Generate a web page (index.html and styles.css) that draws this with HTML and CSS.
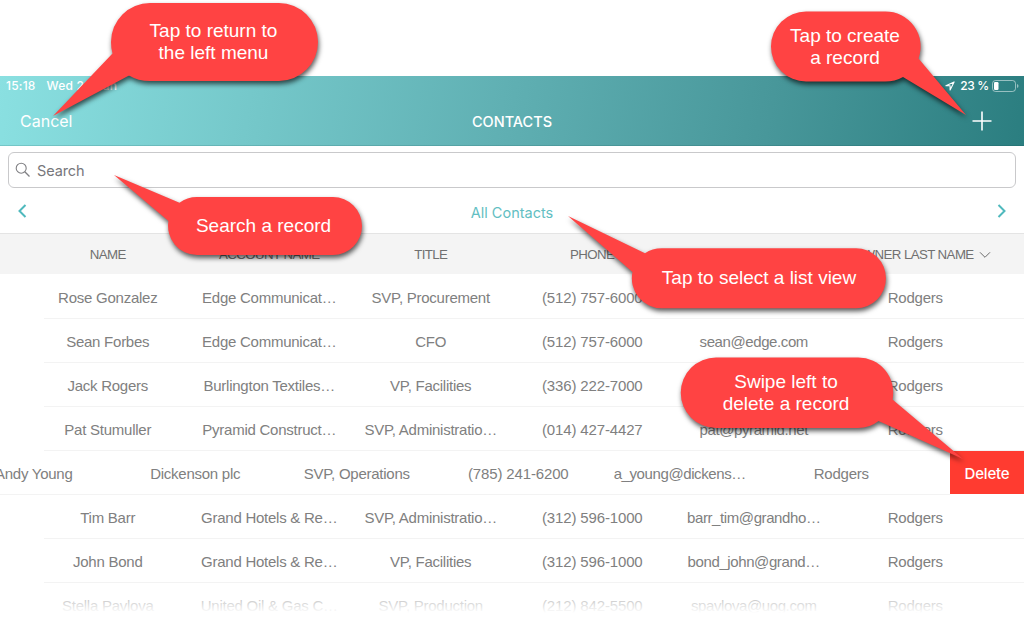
FILE: index.html
```html
<!DOCTYPE html>
<html lang="en">
<head>
<meta charset="utf-8">
<title>Contacts</title>
<link rel="stylesheet" href="styles.css">
</head>
<body>
<div class="page">
  <header class="topbar">
    <div class="status">
      <div class="status-left"><span>15:18</span><span>Wed 26 Jun</span></div>
      <div class="status-right">
        <svg class="wifi" width="13" height="10" viewBox="0 0 13 10"><path d="M1 4a8 8 0 0 1 11 0M3 6.300a5 5 0 0 1 7 0M6.500 9v-1" fill="none" stroke="#fff" stroke-width="1.400"/></svg>
        <svg class="arrow" width="10" height="10" viewBox="0 0 10 10"><path d="M9.100 .9L.9 4.700h4.200v4.300z" fill="none" stroke="#fff" stroke-width="1.100" stroke-linejoin="round"/></svg>
        <span class="percent">23 %</span>
        <svg class="battery" width="27" height="12" viewBox="0 0 27 12"><rect x=".5" y=".5" width="23" height="11" rx="3" fill="none" stroke="#fff" stroke-opacity=".5"/><rect x="2" y="2" width="4.500" height="8" rx="1.200" fill="#fff"/><path d="M25 4v4q1.500-.6 1.500-2t-1.500-2z" fill="#fff" fill-opacity=".5"/></svg>
      </div>
    </div>
    <div class="nav">
      <span class="cancel">Cancel</span>
      <span class="title">CONTACTS</span>
      <svg class="plus" width="20" height="20" viewBox="0 0 20 20"><path d="M10 .5v19M.5 10h19" stroke="#fff" stroke-width="1.600"/></svg>
    </div>
  </header>

  <div class="search">
    <svg width="16" height="16" viewBox="0 0 16 16"><circle cx="6.200" cy="6.200" r="5" fill="none" stroke="#808084" stroke-width="1.100"/><path d="M9.800 9.800L14.500 14.500" stroke="#808084" stroke-width="1.300"/></svg>
    <span>Search</span>
  </div>

  <div class="switcher">
    <svg width="9" height="14" viewBox="0 0 9 14"><path d="M7.500 1L1.500 7l6 6" fill="none" stroke="#4fb9bd" stroke-width="2"/></svg>
    <span>All Contacts</span>
    <svg width="9" height="14" viewBox="0 0 9 14"><path d="M1.500 1L7.500 7l-6 6" fill="none" stroke="#4fb9bd" stroke-width="2"/></svg>
  </div>

  <div class="columns head">
    <span>NAME</span><span>ACCOUNT NAME</span><span>TITLE</span><span>PHONE</span><span></span>
    <span class="sorted">OWNER LAST NAME<svg width="12" height="8" viewBox="0 0 12 8"><path d="M1 1.300l5 5 5-5" fill="none" stroke="#6c6c6c"/></svg></span>
  </div>

  <main class="list">
    <div class="columns row"><span>Rose Gonzalez</span><span>Edge Communicat…</span><span>SVP, Procurement</span><span class="phone">(512) 757-6000</span><span></span><span>Rodgers</span></div>
    <div class="columns row"><span>Sean Forbes</span><span>Edge Communicat…</span><span>CFO</span><span class="phone">(512) 757-6000</span><span class="mail">sean@edge.com</span><span>Rodgers</span></div>
    <div class="columns row"><span>Jack Rogers</span><span>Burlington Textiles…</span><span>VP, Facilities</span><span class="phone">(336) 222-7000</span><span></span><span>Rodgers</span></div>
    <div class="columns row"><span>Pat Stumuller</span><span>Pyramid Construct…</span><span>SVP, Administratio…</span><span class="phone">(014) 427-4427</span><span class="mail">pat@pyramid.net</span><span>Rodgers</span></div>
    <div class="swiped">
      <div class="columns row"><span>Andy Young</span><span>Dickenson plc</span><span>SVP, Operations</span><span class="phone">(785) 241-6200</span><span class="mail">a_young@dickens…</span><span>Rodgers</span></div>
      <div class="delete">Delete</div>
    </div>
    <div class="columns row"><span>Tim Barr</span><span>Grand Hotels &amp; Re…</span><span>SVP, Administratio…</span><span class="phone">(312) 596-1000</span><span class="mail">barr_tim@grandho…</span><span>Rodgers</span></div>
    <div class="columns row"><span>John Bond</span><span>Grand Hotels &amp; Re…</span><span>VP, Facilities</span><span class="phone">(312) 596-1000</span><span class="mail">bond_john@grand…</span><span>Rodgers</span></div>
    <div class="columns row"><span>Stella Pavlova</span><span>United Oil &amp; Gas C…</span><span>SVP, Production</span><span class="phone">(212) 842-5500</span><span class="mail">spavlova@uog.com</span><span>Rodgers</span></div>
  </main>
  <div class="fade"></div>

  <svg class="tails" width="1024" height="620" viewBox="0 0 1024 620">
    <g fill="#ff4343">
      <path class="bubble" d="M150 3H279A39 39 0 0 1 279 81H150Q138 81 129 75.500L53 116L112.500 53.500Q111 48 111 42A39 39 0 0 1 150 3Z"/>
      <path class="bubble" d="M806 11.500H885A35 35 0 0 1 918.500 58.500L966 115L903 77Q895 81.500 885 81.500H806A35 35 0 0 1 806 11.500Z"/>
      <path class="bubble" d="M197 197H333A29 29 0 0 1 333 255H197A29 29 0 0 1 168.500 221L114 175L179.500 202.700Q187 197 197 197Z"/>
      <path class="bubble" d="M662 248.300H856A30 30 0 0 1 856 308.300H662A30 30 0 0 1 632.500 272L568 216L645 253.200Q652 248.300 662 248.300Z"/>
      <path class="bubble" d="M716 357.500H858A35 35 0 0 1 892.500 399.500L963 459L878.500 421Q870 428 858 428H716A35 35 0 0 1 716 357.500Z"/>
    </g>
  </svg>
  <div class="note note-menu">Tap to return to<br>the left menu</div>
  <div class="note note-create">Tap to create<br>a record</div>
  <div class="note note-search">Search a record</div>
  <div class="note note-view">Tap to select a list view</div>
  <div class="note note-delete">Swipe left to<br>delete a record</div>
</div>
</body>
</html>
```
FILE: styles.css
```css
* { box-sizing: border-box; }
body { margin: 0; background: #fff; }
.page {
  position: relative;
  width: 1024px;
  height: 620px;
  padding-top: 76px;
  overflow: hidden;
  font-family: Inter, sans-serif;
}
.topbar {
  height: 70px;
  background: linear-gradient(99deg, #8ae0e1 0%, #5fafb2 50%, #48979a 75%, #2b7e80 100%);
  border-bottom: 1px solid rgba(0, 60, 60, .15);
  color: #fff;
}
.status {
  display: flex;
  justify-content: space-between;
  height: 20px;
  padding: 0 5px 0 6px;
  font-size: 12px;
  font-weight: 500;
  line-height: 20px;
}
.status-left { display: flex; gap: 11px; letter-spacing: .2px; }
.status-right { display: flex; align-items: center; }
.arrow { margin: 0 5px 0 5px; }
.battery { margin-left: 3px; }
.percent { letter-spacing: -.3px; }
.nav {
  display: grid;
  grid-template-columns: 1fr auto 1fr;
  align-items: center;
  height: 50px;
  padding: 0 32px 0 20px;
}
.cancel { font-size: 16px; font-weight: 400; }
.title { font-size: 14.500px; font-weight: 500; margin-left: 12px; }
.plus { justify-self: end; }
.search {
  display: flex;
  align-items: center;
  gap: 6px;
  height: 36px;
  margin: 6px 8px 0;
  padding-left: 6px;
  border: 1px solid #c9c9cb;
  border-radius: 6px;
  font-size: 14.500px;
  letter-spacing: -.1px;
  color: #77777b;
}
.switcher {
  display: flex;
  align-items: center;
  justify-content: space-between;
  height: 45px;
  padding: 0 18px;
  font-size: 14.500px;
  color: #62bec2;
}
.switcher span { padding-top: 4px; }
.columns {
  display: grid;
  grid-template-columns: repeat(6, 161.5px);
  align-items: center;
  padding-left: 27px;
  font-family: "Liberation Sans", Arial, sans-serif;
  text-align: center;
  white-space: nowrap;
}
.head {
  height: 41px;
  border-top: 1px solid #e4e4e4;
  background: #f4f4f4;
  font-size: 13.300px;
  letter-spacing: -.6px;
  color: #707070;
}
.sorted { padding-left: 13px; }
.sorted svg { margin-left: 5px; }
.row {
  position: relative;
  height: 44px;
  padding-top: 3px;
  font-size: 15px;
  letter-spacing: -.25px;
  color: #808080;
}
.phone { letter-spacing: -.14px; }
.mail { letter-spacing: -.4px; }
.row::after {
  content: "";
  position: absolute;
  left: 44px;
  right: 0;
  bottom: -1px;
  height: 1px;
  background: #f3f3f3;
}
.swiped { display: flex; height: 44px; }
.swiped .row { flex: 0 0 1024px; margin-left: -74px; }
.delete {
  width: 74px;
  height: 43px;
  margin-top: 1px;
  background: #ff3b30;
  color: #fff;
  font-size: 15px;
  font-weight: 500;
  letter-spacing: -.2px;
  line-height: 45px;
  text-align: center;
}
.fade {
  position: absolute;
  left: 0;
  top: 585px;
  width: 1024px;
  height: 35px;
  background: linear-gradient(rgba(255, 255, 255, .15), #fff 80%);
}
.tails { position: absolute; left: 0; top: 0; }
.bubble { filter: drop-shadow(1px 3px 2.500px rgba(0, 0, 0, .65)); }
.note {
  position: absolute;
  display: flex;
  align-items: center;
  justify-content: center;
  font: 19px/22px "Liberation Sans", Arial, sans-serif;
  color: #fff;
  text-align: center;
  white-space: nowrap;
}
.note-menu { left: 111px; top: 3px; width: 205px; height: 78px; }
.note-create { left: 771px; top: 12px; width: 148px; height: 70px; }
.note-search { left: 168px; top: 197px; width: 191px; height: 58px; }
.note-view { left: 632px; top: 248px; width: 254px; height: 60px; }
.note-delete { left: 681px; top: 358px; width: 210px; height: 70px; }
```
